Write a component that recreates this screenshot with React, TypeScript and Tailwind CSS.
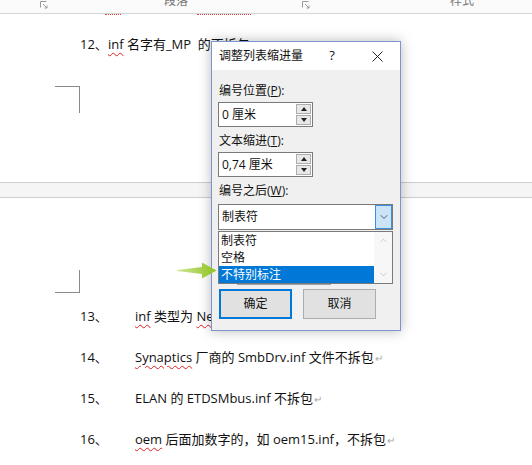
import { ChevronDown, ChevronUp } from 'lucide-react';

const docFont = "font-['Open_Sans','Noto_Sans_CJK_SC',sans-serif]";

function Launcher() {
  // tiny dialog-launcher glyph under ribbon groups
  return (
    <svg width="8" height="8" viewBox="0 0 8 8" className="mt-[1px]">
      <path d="M0.5 0.5 H6.5 M0.5 0.5 V6.5" stroke="#9a9a9a" fill="none" />
      <path d="M3 3 L7 7 M7 4.5 V7 H4.5" stroke="#9a9a9a" fill="none" />
    </svg>
  );
}

function Wavy({ children }: { children: React.ReactNode }) {
  return (
    <span className="underline decoration-wavy decoration-[#e02020] decoration-1 underline-offset-[3px]">
      {children}
    </span>
  );
}

function Mark() {
  return <span className="ml-[1px] text-[10px] text-[#a8a8a8]">↵</span>;
}

function ListRow({ num, children }: { num: string; children: React.ReactNode }) {
  return (
    <div className="flex h-[20px] items-center pl-[80px] text-[13px] leading-[20px] text-[#111] whitespace-nowrap">
      <span className="w-[55px]">{num}</span>
      <span>{children}</span>
    </div>
  );
}

function Spinner() {
  return (
    <div className="flex h-full w-[16px] flex-col gap-[1px] py-[1px] pr-[1px]">
      <div className="flex flex-1 items-center justify-center border border-[#adadad] bg-[#e8e8e8]">
        <svg width="6" height="4" viewBox="0 0 6 4"><path d="M0 4 L3 0 L6 4 Z" fill="#222" /></svg>
      </div>
      <div className="flex flex-1 items-center justify-center border border-[#adadad] bg-[#e8e8e8]">
        <svg width="6" height="4" viewBox="0 0 6 4"><path d="M0 0 L3 4 L6 0 Z" fill="#222" /></svg>
      </div>
    </div>
  );
}

function SpinField({ value }: { value: string }) {
  return (
    <div className="flex h-[25px] w-[95px] items-center justify-between border border-[#7a7a7a] bg-white pl-[3px]">
      <span>{value}</span>
      <Spinner />
    </div>
  );
}

export default function App() {
  return (
    <div className={`relative h-[465px] w-[532px] overflow-hidden bg-white ${docFont}`}>
      {/* ribbon group labels, cut off at the top */}
      <div className="flex h-[14px] items-start overflow-hidden border-b border-[#d6d6d6] bg-[#fbfbfb] text-[12px] text-[#777]">
        <div className="w-[40px]" />
        <Launcher />
        <div className="w-[116px]" />
        <span className="-mt-[7px] w-[24px] leading-[16px]">段落</span>
        <div className="w-[114px]" />
        <Launcher />
        <div className="w-[140px]" />
        <span className="-mt-[7px] w-[24px] leading-[16px]">样式</span>
      </div>

      {/* spell-check squiggles from the line scrolled under the ribbon */}
      <div className="flex h-[3px] items-start">
        <span className="ml-[105px] w-[16px] border-b border-dotted border-[#e04040]" />
        <span className="ml-[76px] w-[54px] border-b border-dotted border-[#e04040]" />
      </div>

      {/* page 1 bottom */}
      <div className="flex h-[165px] flex-col pt-[18px]">
        <div className="flex h-[20px] items-center pl-[80px] text-[13px] text-[#111] whitespace-nowrap">
          12、<Wavy>inf</Wavy>&nbsp;名字有_MP&nbsp; 的不拆包
        </div>
        <div className="ml-[55px] mt-[31px] h-[27px] w-[25px] border-r border-t border-[#8a8a8a]" />
      </div>

      {/* gap between pages */}
      <div className="h-[16px] border-y border-[#cdcdcd] bg-[#f5f5f5]" />

      {/* page 2 top */}
      <div className="ml-[55px] mt-[72px] h-[23px] w-[25px] border-b border-r border-[#8a8a8a]" />

      <div className="mt-[13px] flex flex-col gap-[21px]">
        <ListRow num="13、">
          <Wavy>inf</Wavy> 类型为 <Wavy>Net</Wavy> 的驱动不拆包
        </ListRow>
        <ListRow num="14、">
          <Wavy>Synaptics</Wavy> 厂商的 SmbDrv.inf 文件不拆包<Mark />
        </ListRow>
        <ListRow num="15、">
          ELAN 的 ETDSMbus.inf 不拆包<Mark />
        </ListRow>
        <ListRow num="16、">
          <Wavy>oem</Wavy> 后面加数字的，如 oem15.inf，不拆包<Mark />
        </ListRow>
      </div>

      {/* pointer arrow */}
      <svg className="absolute left-[177px] top-[262px] z-30" width="40" height="17" viewBox="0 0 40 17">
        <defs>
          <linearGradient id="arrowFill" x1="0" x2="1" y1="0" y2="0">
            <stop offset="0" stopColor="#d2e79a" />
            <stop offset="1" stopColor="#8cc21e" />
          </linearGradient>
        </defs>
        <path d="M0 8 L25 5 L25 0.5 L39.5 8.5 L25 16.5 L25 12 L0 9 Z" fill="url(#arrowFill)" />
      </svg>

      {/* 调整列表缩进量 dialog */}
      <div className="absolute left-[211px] top-[41px] z-20 flex h-[290px] w-[190px] flex-col border border-[#7d95cf] bg-[#f0f0f0] text-[12px] text-[#111] shadow-[0_0_12px_rgba(0,0,0,0.28)]">
        <div className="flex h-[28px] items-center bg-white pl-[7px]">
          <span className="flex-1">调整列表缩进量</span>
          <span className="flex w-[46px] justify-center text-[13px]">?</span>
          <span className="flex w-[45px] justify-center">
            <svg width="11" height="11" viewBox="0 0 11 11">
              <path d="M0.5 0.5 L10.5 10.5 M10.5 0.5 L0.5 10.5" stroke="#222" strokeWidth="1" />
            </svg>
          </span>
        </div>

        <div className="flex flex-col pl-[6px] pt-[13px]">
          <span className="mb-[3px] ml-[1px] h-[16px] leading-[16px]">
            编号位置(<span className="underline">P</span>):
          </span>
          <SpinField value="0 厘米" />

          <span className="mb-[3px] ml-[1px] mt-[6px] h-[16px] leading-[16px]">
            文本缩进(<span className="underline">T</span>):
          </span>
          <SpinField value="0,74 厘米" />

          <span className="mb-[5px] ml-[1px] mt-[6px] h-[16px] leading-[16px]">
            编号之后(<span className="underline">W</span>):
          </span>

          <div className="relative w-[175px]">
            <div className="flex h-[26px] items-stretch border border-[#7a7a7a] bg-white">
              <span className="flex flex-1 items-center pl-[3px]">制表符</span>
              <span className="flex w-[17px] items-center justify-center border border-[#3c8fdc] bg-[#cce4f7]">
                <ChevronDown size={12} strokeWidth={1.5} color="#333" />
              </span>
            </div>

            {/* open drop-down list */}
            <div className="absolute left-0 top-[27px] z-10 flex h-[53px] w-[175px] border border-[#7a7a7a] bg-white">
              <div className="flex flex-1 flex-col">
                <span className="h-[17px] pl-[2px] leading-[17px]">制表符</span>
                <span className="h-[17px] pl-[2px] leading-[17px]">空格</span>
                <span className="h-[17px] bg-[#0078d7] pl-[2px] leading-[17px] text-white">不特别标注</span>
              </div>
              <div className="flex w-[18px] flex-col items-center justify-between bg-[#f7f7f7] py-[3px]">
                <ChevronUp size={11} strokeWidth={1.5} color="#b8b8b8" />
                <ChevronDown size={11} strokeWidth={1.5} color="#b8b8b8" />
              </div>
            </div>
          </div>

          {/* control hidden under the list */}
          <div className="h-[59px] pt-[30px]">
            <div className="ml-[19px] h-[25px] w-[94px] border-b border-[#a0a0a0]" />
          </div>

          <div className="flex gap-[11px] pl-[1px]">
            <button className="flex h-[30px] w-[73px] items-center justify-center border-2 border-[#0078d7] bg-[#e1e1e1]">
              确定
            </button>
            <button className="flex h-[30px] w-[73px] items-center justify-center border border-[#adadad] bg-[#e1e1e1]">
              取消
            </button>
          </div>
        </div>
      </div>
    </div>
  );
}
